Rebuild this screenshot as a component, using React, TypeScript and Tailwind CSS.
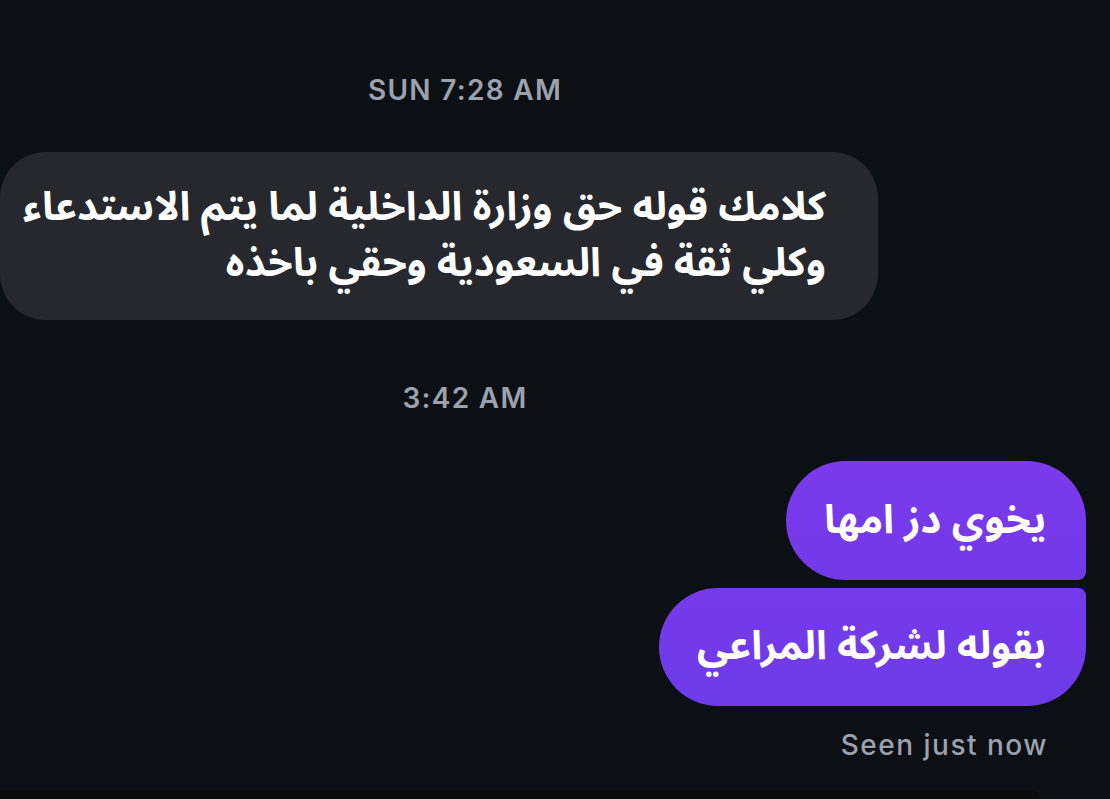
import React from "react";

type Side = "in" | "out";

interface Msg {
  id: number;
  side: Side;
  lines: string[];
}

const arabicFont = { fontFamily: '"Noto Sans Arabic", "DejaVu Sans", "Noto Sans", sans-serif' };
const latinFont = { fontFamily: 'Inter, "Noto Sans", sans-serif' };

function TimeLabel({ children, className = "" }: { children: React.ReactNode; className?: string }) {
  return (
    <div
      className={`w-[930px] text-center text-[28px] leading-[32px] tracking-[1.3px] font-semibold text-[#9ca2ad] ${className}`}
      style={latinFont}
    >
      {children}
    </div>
  );
}

export default function App() {
  const incoming: Msg = {
    id: 1,
    side: "in",
    lines: ["كلامك قوله حق وزارة الداخلية لما يتم الاستدعاء", "وكلي ثقة في السعودية وحقي باخذه"],
  };

  return (
    <div className="w-[1110px] h-[799px] bg-[#0c0f13] flex flex-col overflow-hidden">
      <div className="flex-1 flex flex-col pt-[74px]">
        <TimeLabel>SUN 7:28 AM</TimeLabel>

        {/* received message */}
        <div className="mt-[46px] flex">
          <div
            dir="rtl"
            className="w-[878px] h-[168px] bg-[#26282d] rounded-[46px] pr-[52px] pl-[16px] py-[28px] text-white text-[40px] leading-[56px] font-bold"
            style={arabicFont}
          >
            {incoming.lines.map((l, i) => (
              <div key={i} className="whitespace-nowrap">
                {l}
              </div>
            ))}
          </div>
        </div>

        <TimeLabel className="mt-[62px]">3:42 AM</TimeLabel>

        {/* sent messages */}
        <div className="mt-[47px] flex flex-col items-end gap-[8px] pr-[24px]">
          <div
            dir="rtl"
            className="h-[119px] flex items-center pl-[38px] pr-[40px] rounded-tl-[60px] rounded-bl-[60px] rounded-tr-[60px] rounded-br-[8px] bg-gradient-to-b from-[#7b3aeb] to-[#7239e9] text-white text-[40px] font-bold"
            style={arabicFont}
          >
            يخوي دز امها
          </div>
          <div
            dir="rtl"
            className="h-[118px] flex items-center pl-[38px] pr-[40px] rounded-tl-[60px] rounded-bl-[60px] rounded-tr-[8px] rounded-br-[60px] bg-gradient-to-b from-[#763aea] to-[#6d3be8] text-white text-[40px] font-bold"
            style={arabicFont}
          >
            بقوله لشركة المراعي
          </div>
        </div>

        <div
          className="mt-[23px] pr-[62px] text-right text-[28px] leading-[32px] tracking-[1.5px] font-medium text-[#9ca2ad]"
          style={latinFont}
        >
          Seen just now
        </div>
      </div>

      {/* composer edge */}
      <div className="h-[8px] w-[1040px] bg-[#0a0a0a] rounded-tr-[80px]" />
    </div>
  );
}
